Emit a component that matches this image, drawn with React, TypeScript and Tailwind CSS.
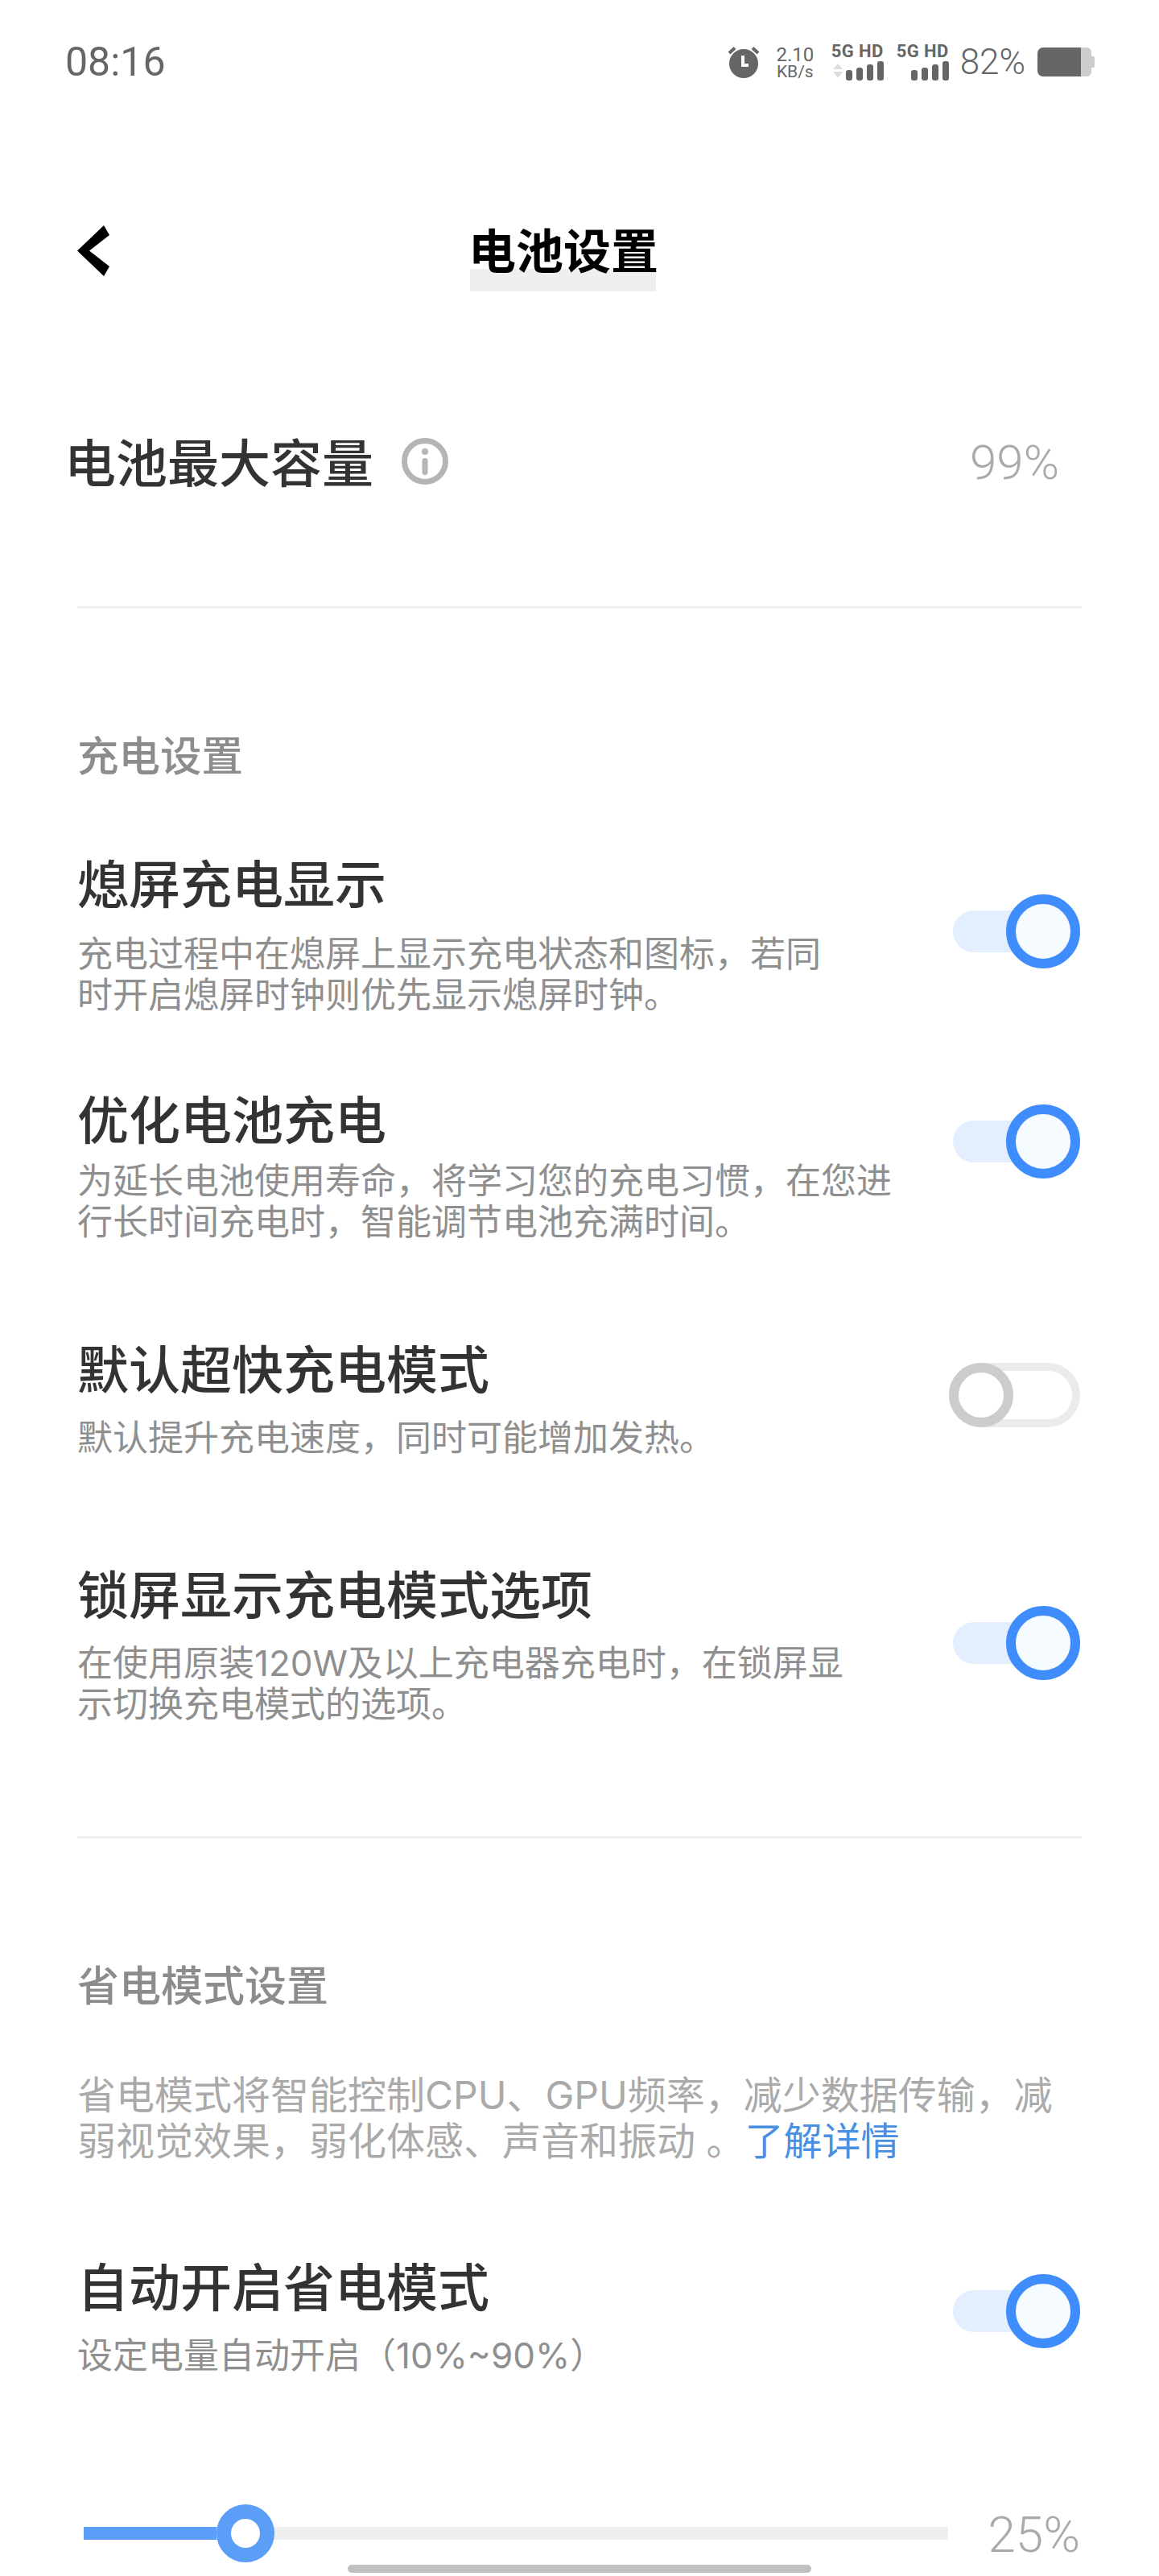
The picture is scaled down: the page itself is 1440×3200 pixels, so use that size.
import React from "react";

const cjk = { fontFamily: '"Noto Sans CJK SC", "Noto Sans", sans-serif' };

function Toggle({ on, className }: { on: boolean; className: string }) {
  if (on) {
    return (
      <div className={`relative h-[92px] w-[158px] shrink-0 ${className}`}>
        <div className="absolute left-0 top-[20px] h-[52px] w-[150px] rounded-full bg-[#e3effe]" />
        <div className="absolute right-0 top-0 h-[92px] w-[92px] rounded-full border-[12px] border-[#3f8dfd] bg-[#f6fbff]" />
      </div>
    );
  }
  return (
    <div className={`flex h-[80px] w-[163px] shrink-0 items-center rounded-full border-[10px] border-[#ebebeb] ${className}`}>
      <div className="-ml-[10px] h-[80px] w-[80px] rounded-full border-[12px] border-[#cccccc] bg-white" />
    </div>
  );
}

function Row({
  title,
  lines,
  on,
  rowClass,
  descClass,
  toggleClass,
}: {
  title: string;
  lines: string[];
  on: boolean;
  rowClass: string;
  descClass: string;
  toggleClass: string;
}) {
  return (
    <div className={`flex justify-between pl-[96px] pr-[98px] ${rowClass}`}>
      <div>
        <div className="h-[80px] text-[64px] font-medium leading-[80px] text-[#333333]">{title}</div>
        <div className={`font-['Inter','Noto_Sans_CJK_SC',sans-serif] text-[44px] leading-[51px] text-[#8f8f8f] ${descClass}`}>
          {lines.map((l) => (
            <div key={l} className="whitespace-nowrap">{l}</div>
          ))}
        </div>
      </div>
      <Toggle on={on} className={toggleClass} />
    </div>
  );
}

function Signal({ arrows }: { arrows: boolean }) {
  return (
    <div className="flex flex-col items-end">
      <span className="h-[20px] text-[22px] font-bold leading-[20px] tracking-[0.4px] text-[#666666]">5G HD</span>
      <svg width="64" height="24" viewBox="0 0 64 24" className="mt-[2px]">
        {arrows && (
          <g fill="#dddddd">
            <path d="M1 10 L7 3 L13 10 Z" />
            <path d="M1 13 L7 21 L13 13 Z" />
          </g>
        )}
        <rect x="17" y="11" width="8" height="13" rx="3" fill="#666666" />
        <rect x="30" y="8" width="8" height="16" rx="3" fill="#666666" />
        <rect x="43" y="4" width="8" height="20" rx="3" fill="#666666" />
        <rect x="56" y="0" width="8" height="24" rx="3" fill="#666666" />
      </svg>
    </div>
  );
}

export default function App() {
  return (
    <div className="relative h-[3200px] w-[1440px] overflow-hidden bg-white" style={cjk}>
      {/* status bar */}
      <div className="flex h-[150px] items-start justify-between pl-[81px] pr-[80px] pt-[52px]">
        <span className="text-[50px] leading-[50px] text-[#666666]" style={{ fontFamily: "Roboto, sans-serif" }}>08:16</span>
        <div className="flex items-center pt-[2px]" style={{ fontFamily: "Roboto, sans-serif" }}>
          <svg width="42" height="40" viewBox="0 0 42 40">
            <circle cx="21" cy="22" r="18" fill="#666666" />
            <path d="M18 12 V26 H27 V22 H22 V12 Z" fill="#ffffff" />
            <path d="M3 9 L10 2.5 M39 9 L32 2.5" stroke="#666666" strokeWidth="4" />
          </svg>
          <div className="ml-[18px] flex w-[50px] flex-col items-center">
            <span className="text-[24px] leading-[24px] text-[#666666]">2.10</span>
            <span className="text-[21px] leading-[18px] text-[#666666]">KB/s</span>
          </div>
          <div className="ml-[20px]"><Signal arrows /></div>
          <div className="ml-[16px]"><Signal arrows={false} /></div>
          <span className="ml-[14px] text-[44px] font-light leading-[44px] text-[#666666]">82%</span>
          <svg width="72" height="38" viewBox="0 0 72 38" className="ml-[14px]">
            <path d="M8 1 H55 V37 H8 A7 7 0 0 1 1 30 V8 A7 7 0 0 1 8 1 Z" fill="#666666" />
            <path d="M55 1 H62 A6 6 0 0 1 68 7 V31 A6 6 0 0 1 62 37 H55 Z" fill="#cccccc" />
            <path d="M68 12 H70 A2 2 0 0 1 72 14 V24 A2 2 0 0 1 70 26 H68 Z" fill="#cccccc" />
          </svg>
        </div>
      </div>

      {/* header */}
      <div className="relative flex h-[212px] justify-center pr-[44px] pt-[121px]">
        <svg width="40" height="63" viewBox="0 0 40 63" className="absolute left-[96px] top-[130px]">
          <polygon points="33,0 40,12 15,31.5 40,51 33,63 0,31.5" fill="#000000" />
        </svg>
        <div className="relative h-[76px] w-[232px]">
          <div className="absolute bottom-[-15px] left-[2px] h-[28px] w-[231px] bg-[#efefef]" />
          <div className="relative whitespace-nowrap text-[59px] font-bold leading-[76px] text-black">电池设置</div>
        </div>
      </div>

      {/* battery capacity */}
      <div className="flex h-[391px] items-start justify-between pl-[80px] pr-[124px] pt-[169px]">
        <div className="flex items-center">
          <span className="text-[64px] font-medium leading-[80px] text-[#333333]">电池最大容量</span>
          <svg width="58" height="58" viewBox="0 0 58 58" className="ml-[35px] mt-[4px]">
            <circle cx="29" cy="29" r="25.5" fill="none" stroke="#b5b5b5" strokeWidth="7" />
            <circle cx="29" cy="17" r="4" fill="#b5b5b5" />
            <rect x="25.5" y="25" width="7" height="21" rx="3.5" fill="#b5b5b5" />
          </svg>
        </div>
        <span className="mt-[4px] text-[60px] font-light leading-[80px] text-[#aaaaaa]" style={{ fontFamily: "Roboto, sans-serif" }}>99%</span>
      </div>
      <div className="mx-[96px] h-[3px] bg-[#f0f0f0]" />

      {/* charging settings */}
      <div className="h-[298px] pl-[96px] pt-[150px] text-[51.5px] font-medium leading-[60px] text-[#8c8c8c]">充电设置</div>

      <Row
        title="熄屏充电显示"
        lines={["充电过程中在熄屏上显示充电状态和图标，若同", "时开启熄屏时钟则优先显示熄屏时钟。"]}
        on
        rowClass="h-[293px]"
        descClass="mt-[26px]"
        toggleClass="mt-[57px]"
      />
      <Row
        title="优化电池充电"
        lines={["为延长电池使用寿命，将学习您的充电习惯，在您进", "行长时间充电时，智能调节电池充满时间。"]}
        on
        rowClass="h-[310px]"
        descClass="mt-[15px]"
        toggleClass="mt-[25px]"
      />
      <Row
        title="默认超快充电模式"
        lines={["默认提升充电速度，同时可能增加发热。"]}
        on={false}
        rowClass="h-[280px]"
        descClass="mt-[24px]"
        toggleClass="mt-[36px]"
      />
      <Row
        title="锁屏显示充电模式选项"
        lines={["在使用原装120W及以上充电器充电时，在锁屏显", "示切换充电模式的选项。"]}
        on
        rowClass="h-[344px]"
        descClass="mt-[24px]"
        toggleClass="mt-[58px]"
      />
      <div className="mx-[96px] h-[3px] bg-[#f0f0f0]" />

      {/* power saving */}
      <div className="pl-[96px] pt-[150px] text-[52px] font-medium leading-[60px] text-[#8c8c8c]">省电模式设置</div>
      <div className="mt-[80px] pl-[96px] font-['Inter','Noto_Sans_CJK_SC',sans-serif] text-[48px] leading-[57px] text-[#aaaaaa]">
        <div className="whitespace-nowrap">省电模式将智能控制CPU、GPU频率，减少数据传输，减</div>
        <div className="whitespace-nowrap">弱视觉效果，弱化体感、声音和振动 。<span className="text-[#4a90e2]">了解详情</span></div>
      </div>

      <div className="mt-[109px]">
        <Row
          title="自动开启省电模式"
          lines={["设定电量自动开启（10%~90%）"]}
          on
          rowClass="h-[270px]"
          descClass="mt-[24px]"
          toggleClass="mt-[28px]"
        />
      </div>

      {/* slider */}
      <div className="absolute left-[104px] right-[98px] top-[3111px] flex h-[72px] items-center justify-between">
        <div className="relative h-[16px] w-[1074px] bg-[#efefef]">
          <div className="h-[16px] w-[165px] bg-[#5a9ef8]" />
          <div className="absolute left-[165px] top-[-28px] h-[72px] w-[72px] rounded-full border-[18px] border-[#5a9ef8] bg-white" />
        </div>
        <span className="mt-[4px] text-[62px] font-light leading-[60px] text-[#aaaaaa]" style={{ fontFamily: "Roboto, sans-serif" }}>25%</span>
      </div>

      {/* home indicator */}
      <div className="absolute left-[432px] top-[3186px] h-[10px] w-[576px] rounded-full bg-[#c0c0c0]" />
    </div>
  );
}
